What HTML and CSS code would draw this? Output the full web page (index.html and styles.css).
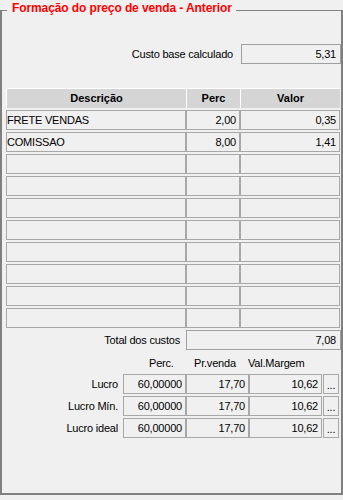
FILE: index.html
```html
<!DOCTYPE html>
<html lang="pt-BR">
<head>
    <meta charset="UTF-8">
    <meta name="viewport" content="width=device-width, initial-scale=1.0">
    <title>Formação do preço de venda</title>
    <link rel="stylesheet" href="styles.css">
</head>
<body>
    <div class="group">
        <div class="group-title">Formação do preço de venda - Anterior</div>

        <div class="line line-base">
            <span>Custo base calculado</span>
            <div class="field field-base">5,31</div>
        </div>

        <!-- Custos que compõem o preço -->
        <div class="grid">
            <div class="grid-head">
                <div class="th">Descrição</div>
                <div class="th">Perc</div>
                <div class="th">Valor</div>
            </div>
            <div class="grid-row">
                <div class="td">FRETE VENDAS</div>
                <div class="td num">2,00</div>
                <div class="td num">0,35</div>
            </div>
            <div class="grid-row">
                <div class="td">COMISSAO</div>
                <div class="td num">8,00</div>
                <div class="td num">1,41</div>
            </div>
            <div class="grid-row"><div class="td"></div><div class="td"></div><div class="td"></div></div>
            <div class="grid-row"><div class="td"></div><div class="td"></div><div class="td"></div></div>
            <div class="grid-row"><div class="td"></div><div class="td"></div><div class="td"></div></div>
            <div class="grid-row"><div class="td"></div><div class="td"></div><div class="td"></div></div>
            <div class="grid-row"><div class="td"></div><div class="td"></div><div class="td"></div></div>
            <div class="grid-row"><div class="td"></div><div class="td"></div><div class="td"></div></div>
            <div class="grid-row"><div class="td"></div><div class="td"></div><div class="td"></div></div>
            <div class="grid-row"><div class="td"></div><div class="td"></div><div class="td"></div></div>
        </div>

        <div class="line line-total">
            <span>Total dos custos</span>
            <div class="field field-total">7,08</div>
        </div>

        <!-- Margens de lucro -->
        <div class="margins">
            <span class="col-perc">Perc.</span>
            <span class="col-venda">Pr.venda</span>
            <span class="col-margem">Val.Margem</span>
        </div>
        <div class="profit-row first">
            <span class="profit-label">Lucro</span>
            <div class="profit-field">60,00000</div>
            <div class="profit-field">17,70</div>
            <div class="profit-field">10,62</div>
            <div class="dots">...</div>
        </div>
        <div class="profit-row">
            <span class="profit-label">Lucro Mín.</span>
            <div class="profit-field">60,00000</div>
            <div class="profit-field">17,70</div>
            <div class="profit-field">10,62</div>
            <div class="dots">...</div>
        </div>
        <div class="profit-row">
            <span class="profit-label">Lucro ideal</span>
            <div class="profit-field">60,00000</div>
            <div class="profit-field">17,70</div>
            <div class="profit-field">10,62</div>
            <div class="dots">...</div>
        </div>
    </div>
</body>
</html>
```

FILE: styles.css
```css
body {
    margin: 0;
    background-color: #f0f0f0;
    font-family: "Liberation Sans", Arial, sans-serif;
    font-size: 11px;
    letter-spacing: -0.2px;
    color: #000;
}

.group {
    position: relative;
    box-sizing: border-box;
    height: 485px;
    margin-top: 10px;
    padding-left: 4px;
    border: 2px solid #808080;
    border-top: 1px solid #808080;
}

.group-title {
    position: absolute;
    top: -10px;
    left: 5px;
    padding: 0 4px 0 5px;
    background-color: #f0f0f0;
    color: #ff0000;
    font-size: 12px;
    font-weight: bold;
    letter-spacing: -0.1px;
    line-height: 14px;
}

.line {
    display: flex;
    justify-content: flex-end;
    align-items: center;
}

.line-base {
    margin-top: 33px;
    gap: 8px;
}

.line-total {
    margin-top: 2px;
    gap: 6px;
}

.field {
    box-sizing: border-box;
    height: 20px;
    padding-right: 4px;
    border: 1px solid #a0a0a0;
    text-align: right;
    line-height: 18px;
}

.field-base {
    width: 100px;
}

.field-total {
    width: 155px;
}

.grid {
    width: 334px;
    margin-top: 24px;
}

.grid-head,
.grid-row {
    display: grid;
    grid-template-columns: 180px 54px 100px;
    height: 20px;
}

.grid-head {
    background-color: #d5d5d5;
}

.th {
    border-top: 1px solid #fff;
    border-left: 1px solid #fff;
    font-weight: bold;
    letter-spacing: 0;
    text-align: center;
    line-height: 19px;
}

.grid-row {
    margin-top: 2px;
}

.td {
    box-sizing: border-box;
    border: 1px solid #a8a8a8;
    line-height: 18px;
    white-space: nowrap;
    overflow: hidden;
}

.td.num {
    padding-right: 3px;
    text-align: right;
}

.margins,
.profit-row {
    display: grid;
    grid-template-columns: 117px 63px 63px 73px 17px;
}

.margins {
    margin-top: 6px;
    height: 14px;
    line-height: 14px;
    white-space: nowrap;
}

.col-perc {
    grid-column: 2;
    padding-left: 26px;
}

.col-venda {
    grid-column: 3;
    padding-left: 8px;
}

.col-margem {
    grid-column: 4;
    margin-left: -1px;
}

.profit-row {
    height: 20px;
    margin-top: 2px;
}

.profit-row.first {
    margin-top: 4px;
}

.profit-label {
    padding-right: 5px;
    text-align: right;
    line-height: 20px;
    white-space: nowrap;
}

.profit-field {
    box-sizing: border-box;
    padding-right: 3px;
    border: 1px solid #a8a8a8;
    text-align: right;
    line-height: 18px;
}

.dots {
    box-sizing: border-box;
    display: flex;
    justify-content: center;
    align-items: flex-end;
    margin-left: 1px;
    padding-bottom: 2px;
    border: 1px solid #a8a8a8;
    line-height: 12px;
}
```
